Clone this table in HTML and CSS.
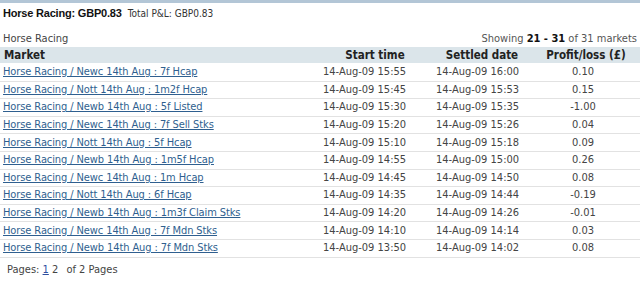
FILE: index.html
```html
<!DOCTYPE html>
<html>
<head>
<meta charset="utf-8">
<link rel="stylesheet" href="styles.css">
</head>
<body>
<div class="topbar"></div>
<div class="title"><span class="title-main">Horse Racing: GBP0.83</span><span class="title-total">Total P&amp;L: GBP0.83</span></div>
<div class="subhead">
  <span class="crumb">Horse Racing</span>
  <span class="showing">Showing <b>21 - 31</b> of 31 markets</span>
</div>
<table class="markets">
  <colgroup><col class="c1"><col class="c2"><col class="c3"><col class="c4"></colgroup>
  <thead>
    <tr><th class="h-market">Market</th><th>Start time</th><th>Settled date</th><th>Profit/loss (£)</th></tr>
  </thead>
  <tbody>
    <tr><td><a href="#">Horse Racing / Newc 14th Aug : 7f Hcap</a></td><td class="t">14-Aug-09 15:55</td><td class="s">14-Aug-09 16:00</td><td class="p">0.10</td></tr>
    <tr><td><a href="#">Horse Racing / Nott 14th Aug : 1m2f Hcap</a></td><td class="t">14-Aug-09 15:45</td><td class="s">14-Aug-09 15:53</td><td class="p">0.15</td></tr>
    <tr><td><a href="#">Horse Racing / Newb 14th Aug : 5f Listed</a></td><td class="t">14-Aug-09 15:30</td><td class="s">14-Aug-09 15:35</td><td class="p">-1.00</td></tr>
    <tr><td><a href="#">Horse Racing / Newc 14th Aug : 7f Sell Stks</a></td><td class="t">14-Aug-09 15:20</td><td class="s">14-Aug-09 15:26</td><td class="p">0.04</td></tr>
    <tr><td><a href="#">Horse Racing / Nott 14th Aug : 5f Hcap</a></td><td class="t">14-Aug-09 15:10</td><td class="s">14-Aug-09 15:18</td><td class="p">0.09</td></tr>
    <tr><td><a href="#">Horse Racing / Newb 14th Aug : 1m5f Hcap</a></td><td class="t">14-Aug-09 14:55</td><td class="s">14-Aug-09 15:00</td><td class="p">0.26</td></tr>
    <tr><td><a href="#">Horse Racing / Newc 14th Aug : 1m Hcap</a></td><td class="t">14-Aug-09 14:45</td><td class="s">14-Aug-09 14:50</td><td class="p">0.08</td></tr>
    <tr><td><a href="#">Horse Racing / Nott 14th Aug : 6f Hcap</a></td><td class="t">14-Aug-09 14:35</td><td class="s">14-Aug-09 14:44</td><td class="p">-0.19</td></tr>
    <tr><td><a href="#">Horse Racing / Newb 14th Aug : 1m3f Claim Stks</a></td><td class="t">14-Aug-09 14:20</td><td class="s">14-Aug-09 14:26</td><td class="p">-0.01</td></tr>
    <tr><td><a href="#">Horse Racing / Newc 14th Aug : 7f Mdn Stks</a></td><td class="t">14-Aug-09 14:10</td><td class="s">14-Aug-09 14:14</td><td class="p">0.03</td></tr>
    <tr><td><a href="#">Horse Racing / Newb 14th Aug : 7f Mdn Stks</a></td><td class="t">14-Aug-09 13:50</td><td class="s">14-Aug-09 14:02</td><td class="p">0.08</td></tr>
  </tbody>
</table>
<div class="pages">Pages: <a href="#">1</a> 2 <span class="of">of 2 Pages</span></div>
</body>
</html>
```
FILE: styles.css
```css
html, body {
  margin: 0;
  padding: 0;
  background: #ffffff;
}
body {
  font-family: "DejaVu Sans Condensed", "DejaVu Sans", sans-serif;
  font-size: 11px;
  color: #444444;
  width: 640px;
}
.topbar {
  height: 3px;
  background: #b3c6d6;
}
.title {
  display: flex;
  gap: 6px;
  align-items: baseline;
  padding: 2px 3px 0;
  height: 17px;
  line-height: 17px;
}
.title-main {
  font-family: "Liberation Sans", Arial, sans-serif;
  font-weight: bold;
  color: #111111;
  font-size: 11px;
  letter-spacing: -0.2px;
}
.title-total {
  color: #333333;
  font-size: 10px;
}
.subhead {
  display: flex;
  justify-content: space-between;
  align-items: baseline;
  padding: 8px 3px 0 3px;
  height: 17px;
  line-height: 17px;
  color: #444444;
}
.showing {
  color: #555555;
}
.showing b {
  color: #111111;
}
.markets {
  width: 640px;
  border-collapse: collapse;
  table-layout: fixed;
}
.c1 { width: 318px; }
.c2 { width: 114px; }
.c3 { width: 100px; }
.c4 { width: 108px; }
.markets th {
  background: #dbe5ea;
  color: #222222;
  font-weight: bold;
  font-size: 11.5px;
  height: 16px;
  line-height: 15px;
  padding: 0;
  text-align: center;
}
.markets th.h-market {
  text-align: left;
  padding-left: 4px;
}
.markets td {
  height: 16.6px;
  line-height: 16px;
  padding: 0;
  border-bottom: 1px solid #e2e2e2;
  white-space: nowrap;
  color: #444444;
}
.markets tbody tr:first-child td {
  padding-top: 1px;
}
.markets td a {
  color: #2f5f8f;
  text-decoration: underline;
  padding-left: 3px;
  letter-spacing: -0.1px;
}
.markets td.t {
  padding-left: 5px;
}
.markets td.s {
  padding-left: 4px;
}
.markets td.p {
  text-align: center;
  padding-right: 6px;
}
.pages {
  padding: 3px 0 0 7px;
  line-height: 17px;
  color: #444444;
}
.pages a {
  color: #2f4f9f;
}
.pages .of {
  margin-left: 5px;
}
```
